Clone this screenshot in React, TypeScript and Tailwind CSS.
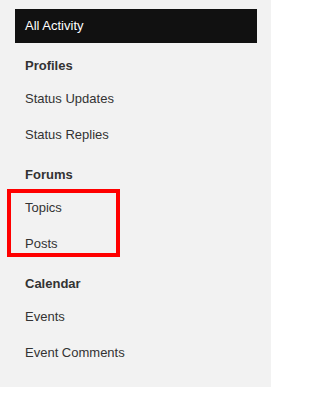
const sections = [
  { title: "Profiles", items: ["Status Updates", "Status Replies"] },
  { title: "Forums", items: ["Topics", "Posts"], marked: true },
  { title: "Calendar", items: ["Events", "Event Comments"] },
];

function Item({ label }: { label: string }) {
  return (
    <div className="flex h-[35.8px] items-center px-[10px] text-[13px] leading-[15px] text-[#333]">
      {label}
    </div>
  );
}

export default function App() {
  return (
    <div
      className="w-[271px] bg-[#f2f2f2] pb-[16px] pl-[15px] pr-[14px] pt-[9px]"
      style={{ fontFamily: '"Liberation Sans", Arial, sans-serif' }}
    >
      <div className="flex h-[34px] items-center bg-[#111111] px-[10px] text-[13px] text-white">
        All Activity
      </div>
      {sections.map((section) => (
        <div key={section.title}>
          <div className="px-[10px] pb-[7.6px] pt-[15px] text-[13px] font-bold leading-[15px] text-[#333]">
            {section.title}
          </div>
          {section.marked ? (
            <div className="relative">
              {section.items.map((item) => (
                <Item key={item} label={item} />
              ))}
              <span className="pointer-events-none absolute -left-[8px] -top-[1px] bottom-[4px] w-[113px] border-[4px] border-[#ff0000]" />
            </div>
          ) : (
            section.items.map((item) => <Item key={item} label={item} />)
          )}
        </div>
      ))}
    </div>
  );
}
